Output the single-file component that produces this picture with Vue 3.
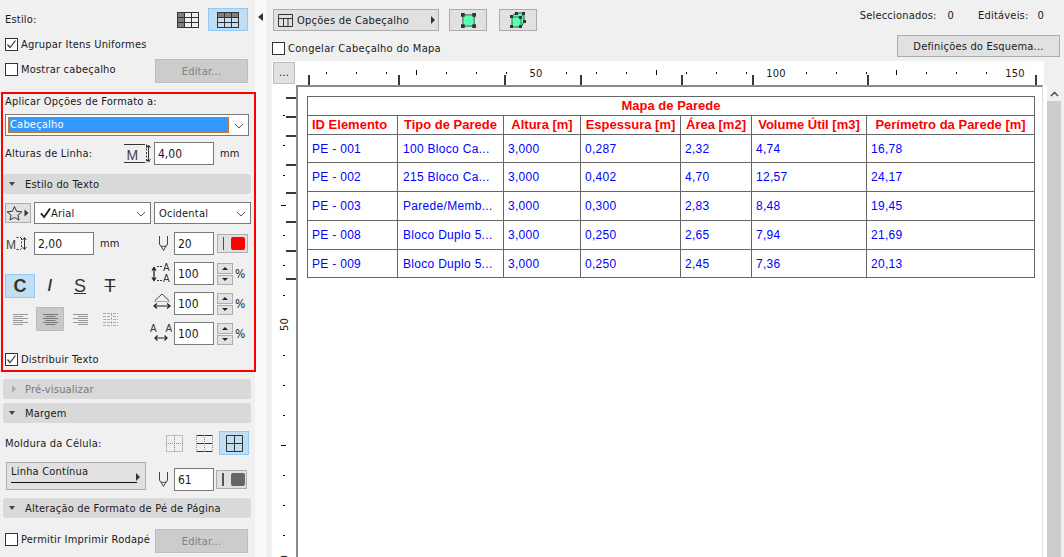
<script setup>
const topTicks = []
for (let k = 1; k <= 25; k++) {
  if (k % 8 === 0) continue
  topTicks.push({ x: 30 * k, tall: k % 8 === 4 })
}
const topLabels = [
  { x: 240, t: '50' },
  { x: 480, t: '100' },
  { x: 719, t: '150' }
]
const colMarks = [12, 102, 208, 284, 385, 456, 571, 739]
const rowMarks = [12, 31, 50, 79, 107, 136, 165, 193]
const leftTicks = []
for (let k = 0; k < 15; k++) {
  const y = 30 + 30 * k
  if (k % 8 === 7) continue
  leftTicks.push({ y, wide: k % 8 === 3 })
}
const cols = [90, 106, 77, 100, 71, 115, 168]
const heads = ['ID Elemento', 'Tipo de Parede', 'Altura [m]', 'Espessura [m]', 'Área [m2]', 'Volume Útil [m3]', 'Perímetro da Parede [m]']
const rows = [
  { h: 28, c: ['PE - 001', '100 Bloco Ca...', '3,000', '0,287', '2,32', '4,74', '16,78'] },
  { h: 29, c: ['PE - 002', '215 Bloco Ca...', '3,000', '0,402', '4,70', '12,57', '24,17'] },
  { h: 29, c: ['PE - 003', 'Parede/Memb...', '3,000', '0,300', '2,83', '8,48', '19,45'] },
  { h: 29, c: ['PE - 008', 'Bloco Duplo 5...', '3,000', '0,250', '2,65', '7,94', '21,69'] },
  { h: 28, c: ['PE - 009', 'Bloco Duplo 5...', '3,000', '0,250', '2,45', '7,36', '20,13'] }
]
</script>

<template>
  <div class="app">
    <aside class="panel">
      <div class="row style-row">
        <span class="style-label">Estilo:</span>
        <span class="style-icons">
          <span class="icon-btn wide">
            <svg width="22" height="16" viewBox="0 0 22 16"><rect x="0.5" y="0.5" width="7" height="15" fill="#808080"/><rect x="0.5" y="0.5" width="21" height="15" fill="none" stroke="#333"/><path d="M7.5 0V16M14.5 0V16M0 5.5H22M0 10.5H22" stroke="#333" fill="none"/></svg>
          </span>
          <span class="icon-btn wide on">
            <svg width="22" height="16" viewBox="0 0 22 16"><rect x="0.5" y="0.5" width="21" height="5" fill="#808080"/><rect x="0.5" y="0.5" width="21" height="15" fill="none" stroke="#333"/><path d="M7.5 0V16M14.5 0V16M0 5.5H22M0 10.5H22" stroke="#333" fill="none"/></svg>
          </span>
        </span>
      </div>
      <label class="row check-row"><span class="box"><svg width="13" height="13" viewBox="0 0 13 13"><path d="M2.5 6.5L5 9.5L10.5 2.5" fill="none" stroke="#333" stroke-width="1.2"/></svg></span>Agrupar Itens Uniformes</label>
      <div class="row show-row">
        <label class="check-inline"><span class="box"></span>Mostrar cabeçalho</label>
        <span class="btn-disabled">Editar...</span>
      </div>

      <div class="frame">
        <div class="f-title">Aplicar Opções de Formato a:</div>
        <div class="select main-select">
          <span class="sel-hl">Cabeçalho</span>
          <svg class="chev" width="10" height="6" viewBox="0 0 10 6"><path d="M1 1L5 5L9 1" fill="none" stroke="#555"/></svg>
        </div>
        <div class="line-row">
          <span class="line-label">Alturas de Linha:</span>
          <svg class="lh-icon" width="28" height="20" viewBox="0 0 28 20">
            <path d="M0 .5H19M0 18.5H19" stroke="#333"/>
            <path d="M19 .5H23M19 18.5H23M22.5 1V18" stroke="#333" stroke-dasharray="2 1.5" fill="none"/>
            <text x="2.5" y="15.5" font-size="14" fill="#444" font-family="Liberation Sans, sans-serif">M</text>
            <path d="M24.5 2V17M22.5 4L24.5 1L26.5 4M22.5 15L24.5 18L26.5 15" stroke="#333" fill="none"/>
          </svg>
          <span class="field f60">4,00</span>
          <span class="unit">mm</span>
        </div>
        <div class="sec sec-in"><i class="tri-d"></i>Estilo do Texto</div>
        <div class="font-row">
          <span class="star-btn">
            <svg width="24" height="16" viewBox="0 0 24 16"><path d="M8.5 1.5L10.6 6.3L15.8 6.8L11.9 10.2L13 15L8.5 12.5L4 15L5.1 10.2L1.2 6.8L6.4 6.3Z" fill="none" stroke="#333"/><path d="M18.5 4.5L22.5 8L18.5 11.5Z" fill="#333"/></svg>
          </span>
          <div class="select font-sel">
            <svg width="11" height="12" viewBox="0 0 12 12"><path d="M1 6.5L4.5 10.5L11 1" fill="none" stroke="#222" stroke-width="2"/></svg>
            <span>Arial</span>
            <svg class="chev" width="10" height="6" viewBox="0 0 10 6"><path d="M1 1L5 5L9 1" fill="none" stroke="#555"/></svg>
          </div>
          <div class="select script-sel">
            <span>Ocidental</span>
            <svg class="chev" width="10" height="6" viewBox="0 0 10 6"><path d="M1 1L5 5L9 1" fill="none" stroke="#555"/></svg>
          </div>
        </div>
        <div class="two">
          <div class="col-l">
            <div class="size-row">
              <svg class="size-icon" width="21" height="13" viewBox="0 0 21 13">
                <text x="0" y="11.5" font-size="12" fill="#444" font-family="Liberation Sans, sans-serif">M</text>
                <path d="M10.5 .5H15M10.5 12.5H15M15.5 1V12" stroke="#333" stroke-dasharray="2 1.5" fill="none"/>
                <path d="M18.5 1V12M16.5 3L18.5 .5L20.5 3M16.5 10L18.5 12.5L20.5 10" stroke="#333" fill="none"/>
              </svg>
              <span class="field f60">2,00</span>
              <span class="unit">mm</span>
            </div>
            <div class="fmt-row">
              <span class="fmt on"><b>C</b></span>
              <span class="fmt it">/</span>
              <span class="fmt un">S</span>
              <span class="fmt st">T</span>
            </div>
            <div class="align-row">
              <span class="al"><svg width="15" height="11" viewBox="0 0 15 11"><path d="M0 .5H15M0 2.5H10M0 4.5H15M0 6.5H10M0 8.5H15M0 10.5H10" stroke="#999"/></svg></span>
              <span class="al on"><svg width="15" height="11" viewBox="0 0 15 11"><path d="M0 .5H15M2.5 2.5H12.5M0 4.5H15M2.5 6.5H12.5M0 8.5H15M2.5 10.5H12.5" stroke="#777"/></svg></span>
              <span class="al"><svg width="15" height="11" viewBox="0 0 15 11"><path d="M0 .5H15M5 2.5H15M0 4.5H15M5 6.5H15M0 8.5H15M5 10.5H15" stroke="#999"/></svg></span>
              <span class="al"><svg width="15" height="13" viewBox="0 0 15 13"><path d="M0 .5H7M10 .5H15M0 3.5H7M10 3.5H15M0 6.5H7M10 6.5H15M0 9.5H7M10 9.5H15M0 12.5H7M10 12.5H15M8.5 0V13" stroke="#aaa" stroke-dasharray="3 1"/></svg></span>
            </div>
          </div>
          <div class="col-r">
            <div class="r-row">
              <svg class="pen" width="9" height="15" viewBox="0 0 9 15"><path d="M.5 0V8Q.5 10.5 4.5 10.5Q8.5 10.5 8.5 8V0M2 10L4.5 14.5L7 10" fill="none" stroke="#444"/></svg>
              <span class="field f40">20</span>
              <span class="color-btn"><i class="cline red"></i><i class="csq red-bg"></i></span>
            </div>
            <div class="r-row">
              <svg class="ico i1" width="20" height="20" viewBox="0 0 20 20">
                <text x="12" y="8" font-size="10" fill="#333" font-family="Liberation Sans, sans-serif">A</text>
                <text x="12" y="19" font-size="10" fill="#333" font-family="Liberation Sans, sans-serif">A</text>
                <path d="M6 3.5H12M6 17.5H12" stroke="#333" stroke-dasharray="2 1" fill="none"/>
                <path d="M3 5V17M1 7.5L3 4.5L5 7.5M1 14.5L3 17.5L5 14.5" stroke="#222" fill="none" stroke-width="1.3"/>
              </svg>
              <span class="field f40">100</span>
              <span class="spin"><i><em class="up"></em></i><i><em class="dn"></em></i></span>
              <span class="pct">%</span>
            </div>
            <div class="r-row">
              <svg class="ico i2" width="18" height="16" viewBox="0 0 18 16">
                <path d="M2 7.5L9 1L16 7.5" fill="none" stroke="#444"/>
                <path d="M1 8.5H17" stroke="#aaa"/>
                <path d="M1 13H17M4 10.5L1 13L4 15.5M14 10.5L17 13L14 15.5" fill="none" stroke="#222" stroke-width="1.2"/>
              </svg>
              <span class="field f40">100</span>
              <span class="spin"><i><em class="up"></em></i><i><em class="dn"></em></i></span>
              <span class="pct">%</span>
            </div>
            <div class="r-row">
              <svg class="ico i3" width="22" height="18" viewBox="0 0 22 18">
                <text x="0" y="9" font-size="10" fill="#333" font-family="Liberation Sans, sans-serif">A</text>
                <text x="15.5" y="9" font-size="10" fill="#333" font-family="Liberation Sans, sans-serif">A</text>
                <path d="M5 15H17M7.5 12.5L5 15L7.5 17.5M14.5 12.5L17 15L14.5 17.5" fill="none" stroke="#222" stroke-width="1.2"/>
              </svg>
              <span class="field f40">100</span>
              <span class="spin"><i><em class="up"></em></i><i><em class="dn"></em></i></span>
              <span class="pct">%</span>
            </div>
          </div>
        </div>
        <label class="dist"><span class="box"><svg width="13" height="13" viewBox="0 0 13 13"><path d="M2.5 6.5L5 9.5L10.5 2.5" fill="none" stroke="#333" stroke-width="1.2"/></svg></span>Distribuir Texto</label>
      </div>

      <div class="sec prev"><i class="tri-r"></i>Pré-visualizar</div>
      <div class="sec marg"><i class="tri-d"></i>Margem</div>
      <div class="cell-row">
        <span>Moldura da Célula:</span>
        <span class="cell-icons">
          <span class="cb"><svg width="17" height="17" viewBox="0 0 17 17"><path d="M.5 .5H16.5V16.5H.5ZM8.5 0V17M0 8.5H17" fill="none" stroke="#888" stroke-dasharray="1 1"/></svg></span>
          <span class="cb"><svg width="17" height="17" viewBox="0 0 17 17"><path d="M.5 .5H16.5M.5 8.5H16.5M.5 16.5H16.5" fill="none" stroke="#333"/><path d="M.5 0V17M8.5 0V17M16.5 0V17" fill="none" stroke="#888" stroke-dasharray="1 1"/></svg></span>
          <span class="cb on"><svg width="17" height="17" viewBox="0 0 17 17"><path d="M.5 .5H16.5V16.5H.5ZM8.5 0V17M0 8.5H17" fill="none" stroke="#333"/></svg></span>
        </span>
      </div>
      <div class="line-type">
        <span class="lt-btn"><span class="lt-name">Linha Contínua</span><i class="lt-line"></i><i class="lt-tri"></i></span>
        <svg class="pen" width="9" height="15" viewBox="0 0 9 15"><path d="M.5 0V8Q.5 10.5 4.5 10.5Q8.5 10.5 8.5 8V0M2 10L4.5 14.5L7 10" fill="none" stroke="#444"/></svg>
        <span class="field f40">61</span>
        <span class="color-btn b30"><i class="cline dark"></i><i class="csq dark-bg"></i></span>
      </div>
      <div class="sec alter"><i class="tri-d"></i>Alteração de Formato de Pé de Página</div>
      <div class="row show-row foot">
        <label class="check-inline"><span class="box"></span>Permitir Imprimir Rodapé</label>
        <span class="btn-disabled">Editar...</span>
      </div>
    </aside>

    <div class="split">
      <svg width="5" height="8" viewBox="0 0 5 8"><path d="M5 0V8L0 4Z" fill="#333"/></svg>
    </div>

    <main class="main">
      <header class="head">
        <div class="head-l">
          <div class="tools">
            <span class="opt-btn">
              <svg width="15" height="13" viewBox="0 0 15 13"><path d="M.5 .5H14.5V12.5H.5ZM0 4.5H15M5.5 5V13M10 5V13" fill="none" stroke="#333"/></svg>
              <span>Opções de Cabeçalho</span>
              <i class="opt-tri"></i>
            </span>
            <span class="tool-btn">
              <svg width="15" height="15" viewBox="0 0 16 16"><rect x="2" y="2" width="12" height="12" fill="#5dffb5" stroke="#2b5a4a"/><path d="M0 0h4v4H0zM12 0h4v4h-4zM0 12h4v4H0zM12 12h4v4h-4z" fill="#333"/></svg>
            </span>
            <span class="tool-btn">
              <svg width="16" height="16" viewBox="0 0 16 16"><path d="M2 4L6 1H14V10L11 15H2Z" fill="#5dffb5" stroke="#2b5a4a"/><path d="M2 5H11V15M11 5L14 1" fill="none" stroke="#2b7a60"/><path d="M0 3h3v3H0zM5 0h3v3H5zM12 0h3v3h-3zM13 8h3v3h-3zM9 13h3v3H9zM0 13h3v3H0zM9 4h3v3H9z" fill="#333"/></svg>
            </span>
          </div>
          <label class="freeze"><span class="box"></span>Congelar Cabeçalho do Mapa</label>
        </div>
        <div class="head-r">
          <div class="stats"><span>Seleccionados:</span><span class="n1">0</span><span class="s2">Editáveis:</span><span class="n2">0</span></div>
          <span class="def-btn">Definições do Esquema...</span>
        </div>
      </header>

      <div class="viewer">
        <div class="grid">
          <div class="corner"><span class="dots">...</span></div>
          <div class="ruler-top">
            <i v-for="t in topTicks" :key="t.x" class="tt" :class="{ tall: t.tall }" :style="{ left: t.x + 'px' }"></i>
            <i v-for="m in colMarks" :key="m" class="cm" :style="{ left: m + 'px' }"></i>
            <span v-for="l in topLabels" :key="l.t" class="tl" :style="{ left: l.x + 'px' }">{{ l.t }}</span>
          </div>
          <div class="ruler-left">
            <i v-for="t in leftTicks" :key="t.y" class="lt" :class="{ wide: t.wide }" :style="{ top: t.y + 'px' }"></i>
            <i v-for="m in rowMarks" :key="m" class="rm" :style="{ top: m + 'px' }"></i>
            <span class="vl v50">50</span>
            <span class="vl v0">0</span>
          </div>
          <div class="canvas">
            <div class="page">
              <table class="sheet">
                <colgroup><col v-for="(w, i) in cols" :key="i" :style="{ width: w + 'px' }"></colgroup>
                <tbody>
                  <tr class="hr"><th colspan="7">Mapa de Parede</th></tr>
                  <tr class="hr"><th v-for="(h, i) in heads" :key="h" :class="{ first: i === 0 }">{{ h }}</th></tr>
                  <tr v-for="r in rows" :key="r.c[0]" :style="{ height: r.h + 'px' }"><td v-for="(c, i) in r.c" :key="i">{{ c }}</td></tr>
                </tbody>
              </table>
            </div>
          </div>
        </div>
        <div class="scroll">
          <svg class="sarrow" width="9" height="6" viewBox="0 0 9 6"><path d="M1 5L4.5 1.5L8 5" fill="none" stroke="#555" stroke-width="1.6"/></svg>
          <div class="thumb"></div>
        </div>
      </div>
    </main>
  </div>
</template>

<style>
html, body { margin: 0; overflow: hidden; background: #f0f0f0; }
</style>

<style scoped>
* { box-sizing: border-box; }
i, em { display: block; font-style: normal; }
.app {
  width: 1064px; height: 557px; display: flex; overflow: hidden; background: #f0f0f0;
  font: 11px "DejaVu Sans Condensed", "DejaVu Sans", sans-serif; letter-spacing: .2px; color: #1a1a1a;
}
.panel { width: 255px; flex: none; padding-top: 8px; }
.row { display: flex; align-items: center; padding-left: 5px; height: 24px; }
.style-row { padding-right: 7px; align-items: flex-start; }
.style-label { line-height: 23px; }
.style-icons { margin-left: auto; display: flex; }
.icon-btn { display: flex; align-items: center; justify-content: center; height: 23px; }
.icon-btn.wide { width: 40px; border: 1px solid transparent; }
.icon-btn.on, .fmt.on, .cb.on { background: #c2def3; border: 1px solid #90c8f6; }
.box { width: 13px; height: 13px; border: 1px solid #333; background: #fff; flex: none; margin-right: 3px; display: block; }
.box svg { display: block; margin: -1px; }
.check-row { height: 24px; }
.check-inline { display: flex; align-items: center; margin-top: -3px; }
.show-row { height: 24px; margin-top: 3px; justify-content: space-between; padding-right: 7px; }
.btn-disabled { width: 93px; height: 24px; background: #cccccc; border: 1px solid #bfbfbf; color: #808080; display: flex; align-items: center; justify-content: center; }

.frame { margin: 9px 0 0 1px; width: 255px; height: 280px; border: 2px solid #f00; padding: 0 0 0 2px; position: relative; }
.f-title { height: 15px; line-height: 14px; padding-top: 1px; }
.select { background: #fff; border: 1px solid #7a7a7a; height: 22px; display: flex; align-items: center; position: relative; }
.main-select { width: 244px; margin-top: 5px; }
.sel-hl { margin-left: 2px; width: 221px; height: 16px; background: #3399ff; color: #fff; outline: 1px dotted #c8742a; outline-offset: -1px; padding-left: 2px; line-height: 16px; }
.chev { position: absolute; right: 4px; top: 8px; }
.line-row { display: flex; align-items: center; height: 23px; margin-top: 6px; }
.line-label { flex: 0 0 119px; }
.lh-icon { margin-right: 2px; flex: none; }
.field { background: #fff; border: 1px solid #7a7a7a; height: 23px; display: flex; align-items: center; padding-left: 3px; flex: none; font-size: 12px; letter-spacing: 0; }
.f60 { width: 60px; }
.f40 { width: 40px; }
.unit { margin-left: 6px; }
.sec { height: 20px; background: #d9d9d9; border-radius: 3px; display: flex; align-items: center; width: 248px; margin-left: 3px; padding-left: 6px; }
.sec-in { margin: 9px 0 0 -2px; }
.tri-d { width: 0; height: 0; border-left: 3.5px solid transparent; border-right: 3.5px solid transparent; border-top: 4px solid #444; margin-right: 10px; }
.tri-r { width: 0; height: 0; border-top: 4px solid transparent; border-bottom: 4px solid transparent; border-left: 4px solid #aaa; margin: 0 9px 0 3px; }
.font-row { display: flex; margin-top: 9px; height: 20px; align-items: stretch; }
.star-btn { width: 26px; background: #e1e1e1; border: 1px solid #adadad; display: flex; align-items: center; justify-content: center; flex: none; }
.font-sel { width: 117px; height: 22px; margin: -1px 0 0 3px; padding-left: 5px; }
.script-sel { width: 97px; height: 22px; margin: -1px 0 0 3px; padding-left: 4px; }
.two { display: flex; margin-top: 9px; height: 113px; }
.col-l { width: 150px; }
.size-row { display: flex; align-items: center; height: 23px; }
.size-icon { margin: 0 7px 0 1px; flex: none; }
.fmt-row { display: flex; margin-top: 19px; height: 24px; }
.fmt { width: 30px; height: 24px; display: flex; align-items: center; justify-content: center; font: 18px "Liberation Sans", sans-serif; letter-spacing: 0; color: #333; }
.fmt.on b { font-weight: 900; }
.fmt.it { font-weight: 700; font-size: 16px; }
.fmt.un { text-decoration: underline; }
.fmt.st { text-decoration: line-through; }
.align-row { display: flex; margin-top: 9px; height: 24px; }
.al { width: 30px; height: 24px; display: flex; align-items: center; justify-content: center; }
.al.on { width: 28px; margin: 0 1px; background: #c8c8c8; border: 1px solid #bbb; }
.col-r { flex: 1; display: flex; flex-direction: column; gap: 7px; }
.r-row { height: 23px; display: flex; align-items: center; justify-content: flex-end; padding-right: 5px; position: relative; }
.r-row .field { position: absolute; left: 19px; top: 0; }
.r-row .pen { position: absolute; left: 4px; top: 4px; }
.r-row .ico { position: absolute; }
.i1 { left: -4px; top: 1px; }
.i2 { left: -2px; top: 1px; }
.i3 { left: -5px; top: 1px; }
.color-btn { position: absolute; left: 62px; top: 2px; width: 31px; height: 19px; background: #e1e1e1; border: 1px solid #adadad; display: flex; align-items: center; padding-left: 5px; }
.cline { width: 1px; height: 13px; }
.csq { width: 14px; height: 13px; border-radius: 2px; margin-left: 7px; }
.red { background: #f00; } .red-bg { background: #f00; }
.dark { background: #555; width: 2px; } .dark-bg { background: #666; }
.spin { position: absolute; left: 62px; top: 1px; width: 16px; height: 22px; display: flex; flex-direction: column; gap: 1px; }
.spin i { flex: 1; background: #e1e1e1; border: 1px solid #adadad; display: flex; align-items: center; justify-content: center; }
.up { border-left: 3px solid transparent; border-right: 3px solid transparent; border-bottom: 3px solid #222; }
.dn { border-left: 3px solid transparent; border-right: 3px solid transparent; border-top: 3px solid #222; }
.pct { position: absolute; left: 80px; top: 5px; font-size: 12px; }
.dist { display: flex; align-items: center; height: 14px; margin-top: 7px; }

.prev { margin-top: 7px; color: #777; }
.marg { margin-top: 4px; }
.cell-row { display: flex; align-items: center; height: 24px; margin-top: 8px; padding: 0 6px 0 5px; }
.cell-icons { margin-left: auto; display: flex; }
.cb { width: 30px; height: 24px; display: flex; align-items: center; justify-content: center; border: 1px solid transparent; }
.line-type { display: flex; align-items: flex-start; height: 29px; margin-top: 7px; padding-left: 6px; position: relative; }
.lt-btn { width: 140px; height: 28px; background: #e1e1e1; border: 1px solid #adadad; position: relative; display: block; }
.lt-name { position: absolute; left: 4px; top: 2px; }
.lt-line { position: absolute; left: 4px; top: 19px; width: 126px; height: 1px; background: #111; }
.lt-tri { position: absolute; right: 5px; top: 10px; border-top: 4px solid transparent; border-bottom: 4px solid transparent; border-left: 4px solid #333; }
.line-type .pen { position: absolute; left: 159px; top: 10px; }
.line-type .field { position: absolute; left: 174px; top: 6px; }
.line-type .color-btn { left: 216px; top: 8px; width: 31px; }
.alter { margin-top: 7px; }
.foot { margin-top: 11px; }

.split { width: 11px; flex: none; background: #f9f9f9; padding: 13px 0 0 3px; }
.split svg { display: block; }
.main { flex: 1; min-width: 0; display: flex; flex-direction: column; }
.head { height: 61px; display: flex; justify-content: space-between; flex: none; }
.head-l { padding: 9px 0 0 7px; }
.tools { display: flex; height: 22px; }
.opt-btn { width: 166px; background: #e1e1e1; border: 1px solid #adadad; display: flex; align-items: center; padding-left: 4px; position: relative; letter-spacing: .25px; }
.opt-btn span { margin-left: 4px; }
.opt-tri { position: absolute; right: 3px; top: 6px; border-top: 4px solid transparent; border-bottom: 4px solid transparent; border-left: 4px solid #333; }
.tool-btn { width: 38px; background: #e1e1e1; border: 1px solid #adadad; margin-left: 10px; display: flex; align-items: center; justify-content: center; }
.tool-btn:last-child { margin-left: 12px; }
.freeze { display: flex; align-items: center; margin: 10px 0 0 -1px; height: 14px; letter-spacing: .3px; }
.head-r { padding-right: 4px; display: flex; flex-direction: column; align-items: flex-end; }
.stats { display: flex; height: 14px; margin-top: 9px; line-height: 14px; padding-right: 16px; }
.n1 { margin-left: 11px; }
.s2 { margin-left: 24px; }
.n2 { margin-left: 9px; }
.def-btn { width: 163px; height: 22px; background: #e1e1e1; border: 1px solid #adadad; display: flex; align-items: center; justify-content: center; margin-top: 12px; }

.viewer { flex: 1; min-height: 0; display: flex; padding-left: 6px; }
.grid { width: 775px; display: grid; grid-template-columns: 24px 1fr; grid-template-rows: 24px 1fr; }
.corner { background: #fff; padding: 1px 0 0 1px; }
.dots { display: block; width: 22px; height: 22px; background: #e1e1e1; border: 1px solid #bdbdbd; text-align: center; line-height: 20px; }
.ruler-top { background: #fff; margin-right: 3px; position: relative; overflow: hidden; }
.tt { position: absolute; top: 11px; width: 1px; height: 2px; background: #000; }
.tt.tall { top: 9px; height: 5px; }
.cm { position: absolute; top: 14px; width: 2px; height: 10px; background: #333b40; }
.tl { position: absolute; top: 7px; transform: translateX(-50%); line-height: 12px; }
.ruler-left { background: #fff; position: relative; overflow: hidden; }
.lt { position: absolute; left: 11px; width: 2px; height: 1px; background: #000; }
.lt.wide { left: 9px; width: 5px; }
.rm { position: absolute; left: 14px; width: 10px; height: 2px; background: #333b40; }
.vl { position: absolute; left: 7px; writing-mode: vertical-rl; transform: rotate(180deg); line-height: 12px; }
.v50 { top: 233px; }
.v0 { top: 470px; }
.canvas { background: #fff; min-height: 0; }
.page { width: 747px; height: 100%; border-top: 2px solid #8a8a8a; border-left: 2px solid #8a8a8a; border-right: 1px solid #ddd; padding: 9px 0 0 9px; }
.sheet { border-collapse: collapse; table-layout: fixed; width: 727px; font-family: "Liberation Sans", Arial, sans-serif; letter-spacing: 0; }
.sheet th, .sheet td { border: 1px solid #666; padding: 0 0 0 4px; white-space: nowrap; overflow: hidden; }
.hr { height: 19px; }
.sheet th { color: #f00; font-size: 13px; text-align: center; padding: 0 0 2px; font-weight: 700; }
.sheet th.first { text-align: left; padding-left: 4px; }
.sheet td { color: #00f; font-size: 12px; letter-spacing: .3px; }
.sheet td:nth-child(2) { padding-left: 5px; }
.scroll { width: 14px; margin-top: 24px; position: relative; display: flex; flex-direction: column; align-items: center; }
.sarrow { margin-top: 6px; flex: none; }
.thumb { width: 14px; flex: 1; background: #cdcdcd; margin-top: 4px; }
</style>
